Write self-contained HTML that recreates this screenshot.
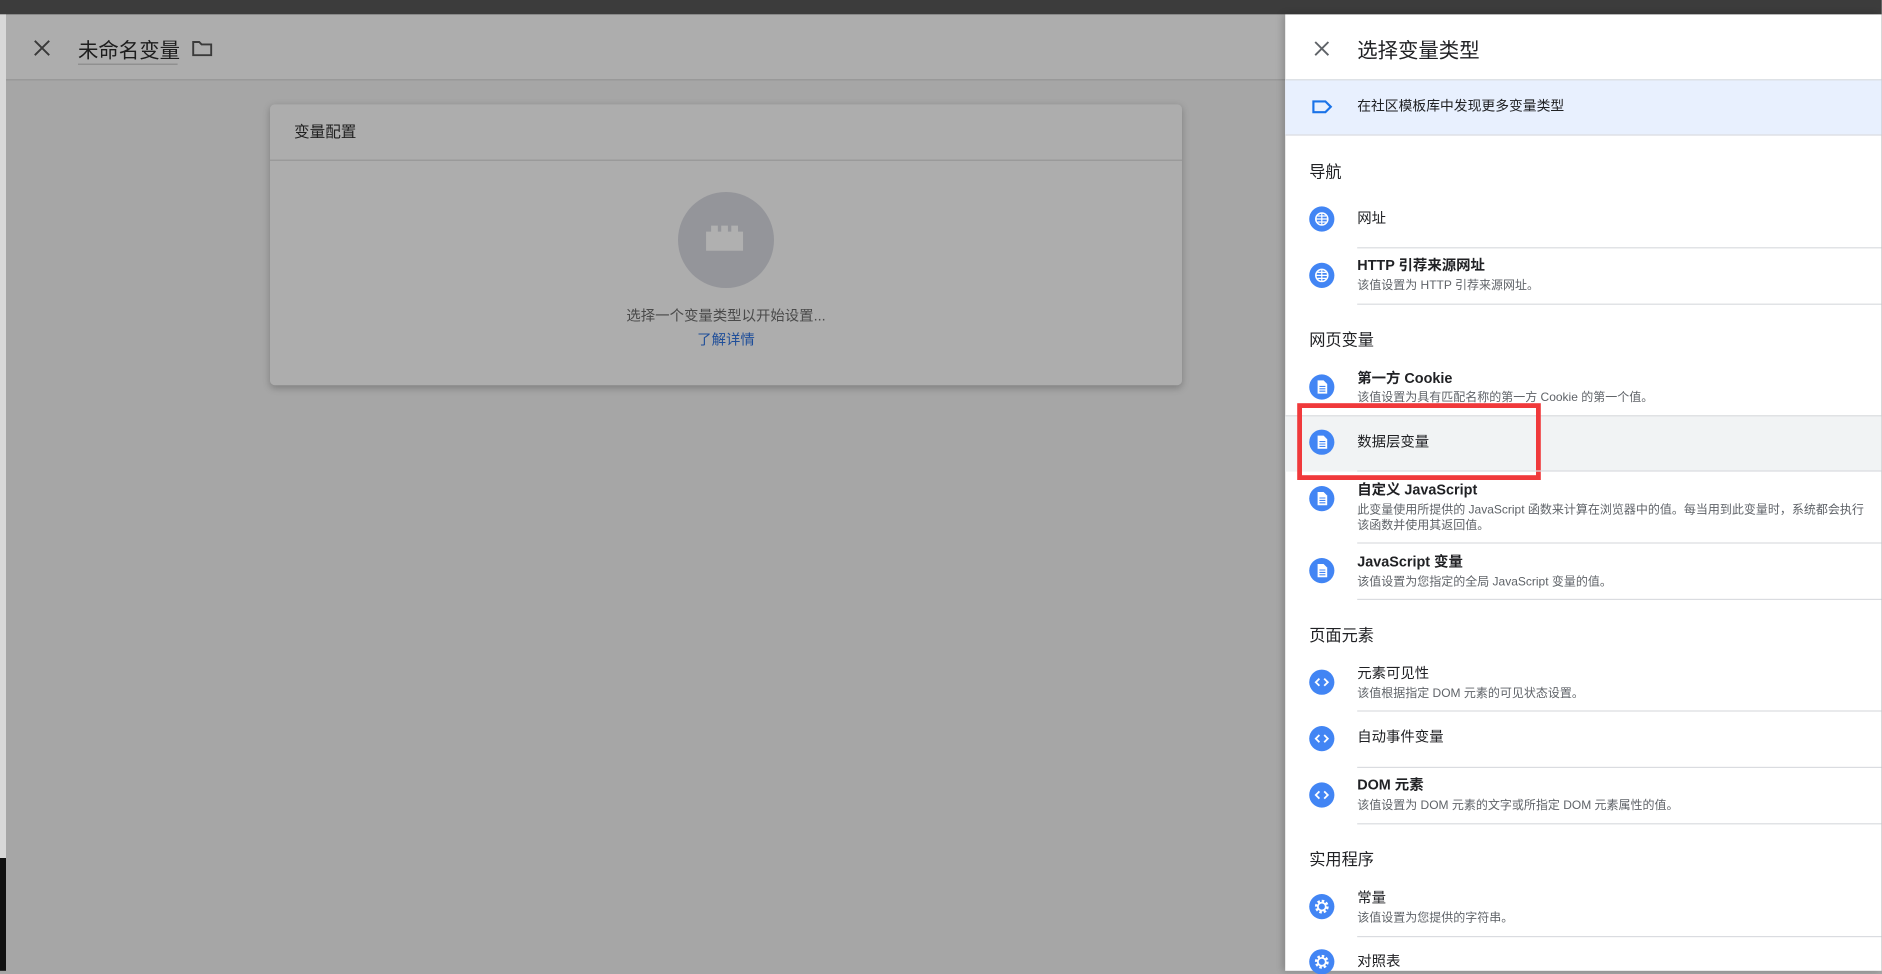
<!DOCTYPE html>
<html><head><meta charset="utf-8"><style>
html,body{margin:0;padding:0;width:1882px;height:971px;overflow:hidden;background:#a6a6a6}
#s{position:absolute;left:0;top:0;width:1568px;height:809px;transform:scale(1.2);transform-origin:0 0;font-family:"Liberation Sans","Noto Sans CJK SC",sans-serif;color:#202124}
.a{position:absolute;white-space:nowrap}
.t{font-size:12px;color:#202124}
.st{font-size:10px;color:#5f6368}
.h{font-size:13.5px;color:#202124}
.d{position:absolute;left:1131px;right:0;height:1px;background:#dadce0}
.ic{position:absolute;left:1091px;width:21px;height:21px;border-radius:50%;background:#4285f4}
.ic svg{position:absolute;left:0;top:0}
</style></head><body><div id="s">
<div class="a" style="left:0;top:0;width:1568px;height:12px;background:#3c3c3c"></div>
<div class="a" style="left:0;top:12px;width:1071px;height:54px;background:#adadad"></div>
<div class="a" style="left:0;top:66px;width:1071px;height:1px;background:#959595"></div>
<div class="a" style="left:0;top:12px;width:5px;height:703px;background:#d8d8d8"></div>
<div class="a" style="left:0;top:715px;width:5px;height:94px;background:#111"></div>
<svg class="a" style="left:28px;top:33px" width="14" height="14"><path d="M1 1L13 13M13 1L1 13" stroke="#3a3a3a" stroke-width="1.6"/></svg>
<div class="a" style="left:65px;top:28px;font-size:17px;color:#1d1d1d">未命名变量</div>
<div class="a" style="left:65px;top:53px;width:83px;height:1px;background:#8a8a8a"></div>
<svg class="a" style="left:160px;top:33px" width="17" height="14"><path d="M1 2h5l2 2h8v9H1z" fill="none" stroke="#3a3a3a" stroke-width="1.6"/></svg>
<div class="a" style="left:225px;top:87px;width:760px;height:234px;background:#adadad;border-radius:4px;box-shadow:0 2px 6px rgba(0,0,0,.25)"></div>
<div class="a" style="left:245px;top:99px;font-size:13px;color:#1f1f1f">变量配置</div>
<div class="a" style="left:225px;top:133px;width:760px;height:1px;background:#969696"></div>
<div class="a" style="left:565px;top:160px;width:80px;height:80px;border-radius:50%;background:#94959a"></div>
<svg class="a" style="left:587px;top:187px" width="36" height="26"><path d="M1 6h3V1h4v5h2V1h4v5h2V1h4v5h3v16H1z" fill="#b0b0b0" transform="scale(1.4 1)"/></svg>
<div class="a" style="left:0;width:1210px;top:254px;text-align:center;font-size:12px;color:#4a4a4a">选择一个变量类型以开始设置...</div>
<div class="a" style="left:0;width:1210px;top:274px;text-align:center;font-size:12px;color:#1f4e99">了解详情</div>

<div class="a" style="left:1071px;top:12px;width:497px;height:797px;background:#fff;box-shadow:-2px 0 6px rgba(0,0,0,.2)"></div>
<svg class="a" style="left:1095px;top:34px" width="13" height="13"><path d="M1 1L12 12M12 1L1 12" stroke="#5f6368" stroke-width="1.6"/></svg>
<div class="a" style="left:1131px;top:28px;font-size:17px;color:#202124">选择变量类型</div>
<div class="a" style="left:1071px;top:66px;width:497px;height:47px;background:#e8f0fe;border-top:1px solid #dadce0;border-bottom:1px solid #dadce0;box-sizing:border-box"></div>
<svg class="a" style="left:1093px;top:83px" width="18" height="12"><path d="M1.5 1.5h10l4.5 4.5-4.5 4.5h-10z" fill="none" stroke="#1a73e8" stroke-width="1.8"/></svg>
<div class="a t" style="left:1131px;top:80px;font-size:11.5px">在社区模板库中发现更多变量类型</div>

<div class="a h" style="left:1091px;top:132px">导航</div>
<div class="ic" style="top:172px"><svg width="21" height="21"><circle cx="10.5" cy="10.5" r="5" fill="none" stroke="#fff" stroke-width="1.3"/><path d="M5.5 10.5h10M10.5 5.5v10M7 8h7M7 13h7" stroke="#fff" stroke-width="1"/></svg></div>
<div class="a t" style="left:1131px;top:173px">网址</div>
<div class="d" style="top:206px"></div>
<div class="ic" style="top:219px"><svg width="21" height="21"><circle cx="10.5" cy="10.5" r="5" fill="none" stroke="#fff" stroke-width="1.3"/><path d="M5.5 10.5h10M10.5 5.5v10M7 8h7M7 13h7" stroke="#fff" stroke-width="1"/></svg></div>
<div class="a t" style="left:1131px;top:212px;font-weight:bold">HTTP 引荐来源网址</div>
<div class="a st" style="left:1131px;top:229px">该值设置为 HTTP 引荐来源网址。</div>
<div class="d" style="top:253px"></div>

<div class="a h" style="left:1091px;top:272px">网页变量</div>
<div class="ic" style="top:312px"><svg width="21" height="21"><path d="M7 5h5l3 3v8H7z" fill="#fff"/><path d="M8.5 10h5M8.5 12h5M8.5 14h5" stroke="#4285f4" stroke-width=".9"/></svg></div>
<div class="a t" style="left:1131px;top:306px;font-weight:bold">第一方 Cookie</div>
<div class="a st" style="left:1131px;top:322px">该值设置为具有匹配名称的第一方 Cookie 的第一个值。</div>
<div class="a" style="left:1071px;top:346px;width:497px;height:46px;background:#f1f3f4;border-top:1px solid #dadce0"></div>
<div class="ic" style="top:358px"><svg width="21" height="21"><path d="M7 5h5l3 3v8H7z" fill="#fff"/><path d="M8.5 10h5M8.5 12h5M8.5 14h5" stroke="#4285f4" stroke-width=".9"/></svg></div>
<div class="a t" style="left:1131px;top:359px">数据层变量</div>
<div class="a" style="left:1081px;top:336px;width:195px;height:56px;border:4px solid #f0393b"></div>
<div class="d" style="top:392px"></div>
<div class="ic" style="top:405px"><svg width="21" height="21"><path d="M7 5h5l3 3v8H7z" fill="#fff"/><path d="M8.5 10h5M8.5 12h5M8.5 14h5" stroke="#4285f4" stroke-width=".9"/></svg></div>
<div class="a t" style="left:1131px;top:399px;font-weight:bold">自定义 JavaScript</div>
<div class="a st" style="left:1131px;top:416px">此变量使用所提供的 JavaScript 函数来计算在浏览器中的值。每当用到此变量时，系统都会执行</div>
<div class="a st" style="left:1131px;top:429px">该函数并使用其返回值。</div>
<div class="d" style="top:452px"></div>
<div class="ic" style="top:465px"><svg width="21" height="21"><path d="M7 5h5l3 3v8H7z" fill="#fff"/><path d="M8.5 10h5M8.5 12h5M8.5 14h5" stroke="#4285f4" stroke-width=".9"/></svg></div>
<div class="a t" style="left:1131px;top:459px;font-weight:bold">JavaScript 变量</div>
<div class="a st" style="left:1131px;top:476px">该值设置为您指定的全局 JavaScript 变量的值。</div>
<div class="d" style="top:499px"></div>

<div class="a h" style="left:1091px;top:518px">页面元素</div>
<div class="ic" style="top:558px"><svg width="21" height="21"><path d="M8.5 7.5l-3 3 3 3M12.5 7.5l3 3-3 3" fill="none" stroke="#fff" stroke-width="1.5"/></svg></div>
<div class="a t" style="left:1131px;top:552px">元素可见性</div>
<div class="a st" style="left:1131px;top:569px">该值根据指定 DOM 元素的可见状态设置。</div>
<div class="d" style="top:592px"></div>
<div class="ic" style="top:605px"><svg width="21" height="21"><path d="M8.5 7.5l-3 3 3 3M12.5 7.5l3 3-3 3" fill="none" stroke="#fff" stroke-width="1.5"/></svg></div>
<div class="a t" style="left:1131px;top:605px">自动事件变量</div>
<div class="d" style="top:639px"></div>
<div class="ic" style="top:652px"><svg width="21" height="21"><path d="M8.5 7.5l-3 3 3 3M12.5 7.5l3 3-3 3" fill="none" stroke="#fff" stroke-width="1.5"/></svg></div>
<div class="a t" style="left:1131px;top:645px;font-weight:bold">DOM 元素</div>
<div class="a st" style="left:1131px;top:662px">该值设置为 DOM 元素的文字或所指定 DOM 元素属性的值。</div>
<div class="d" style="top:686px"></div>

<div class="a h" style="left:1091px;top:705px">实用程序</div>
<div class="ic" style="top:745px"><svg width="21" height="21"><circle cx="10.5" cy="10.5" r="4.5" fill="none" stroke="#fff" stroke-width="2.5" stroke-dasharray="2 1.5"/><circle cx="10.5" cy="10.5" r="3.3" fill="none" stroke="#fff" stroke-width="1.5"/></svg></div>
<div class="a t" style="left:1131px;top:739px">常量</div>
<div class="a st" style="left:1131px;top:756px">该值设置为您提供的字符串。</div>
<div class="d" style="top:780px"></div>
<div class="ic" style="top:791px"><svg width="21" height="21"><circle cx="10.5" cy="10.5" r="4.5" fill="none" stroke="#fff" stroke-width="2.5" stroke-dasharray="2 1.5"/><circle cx="10.5" cy="10.5" r="3.3" fill="none" stroke="#fff" stroke-width="1.5"/></svg></div>
<div class="a t" style="left:1131px;top:792px">对照表</div>
</div></body></html>
